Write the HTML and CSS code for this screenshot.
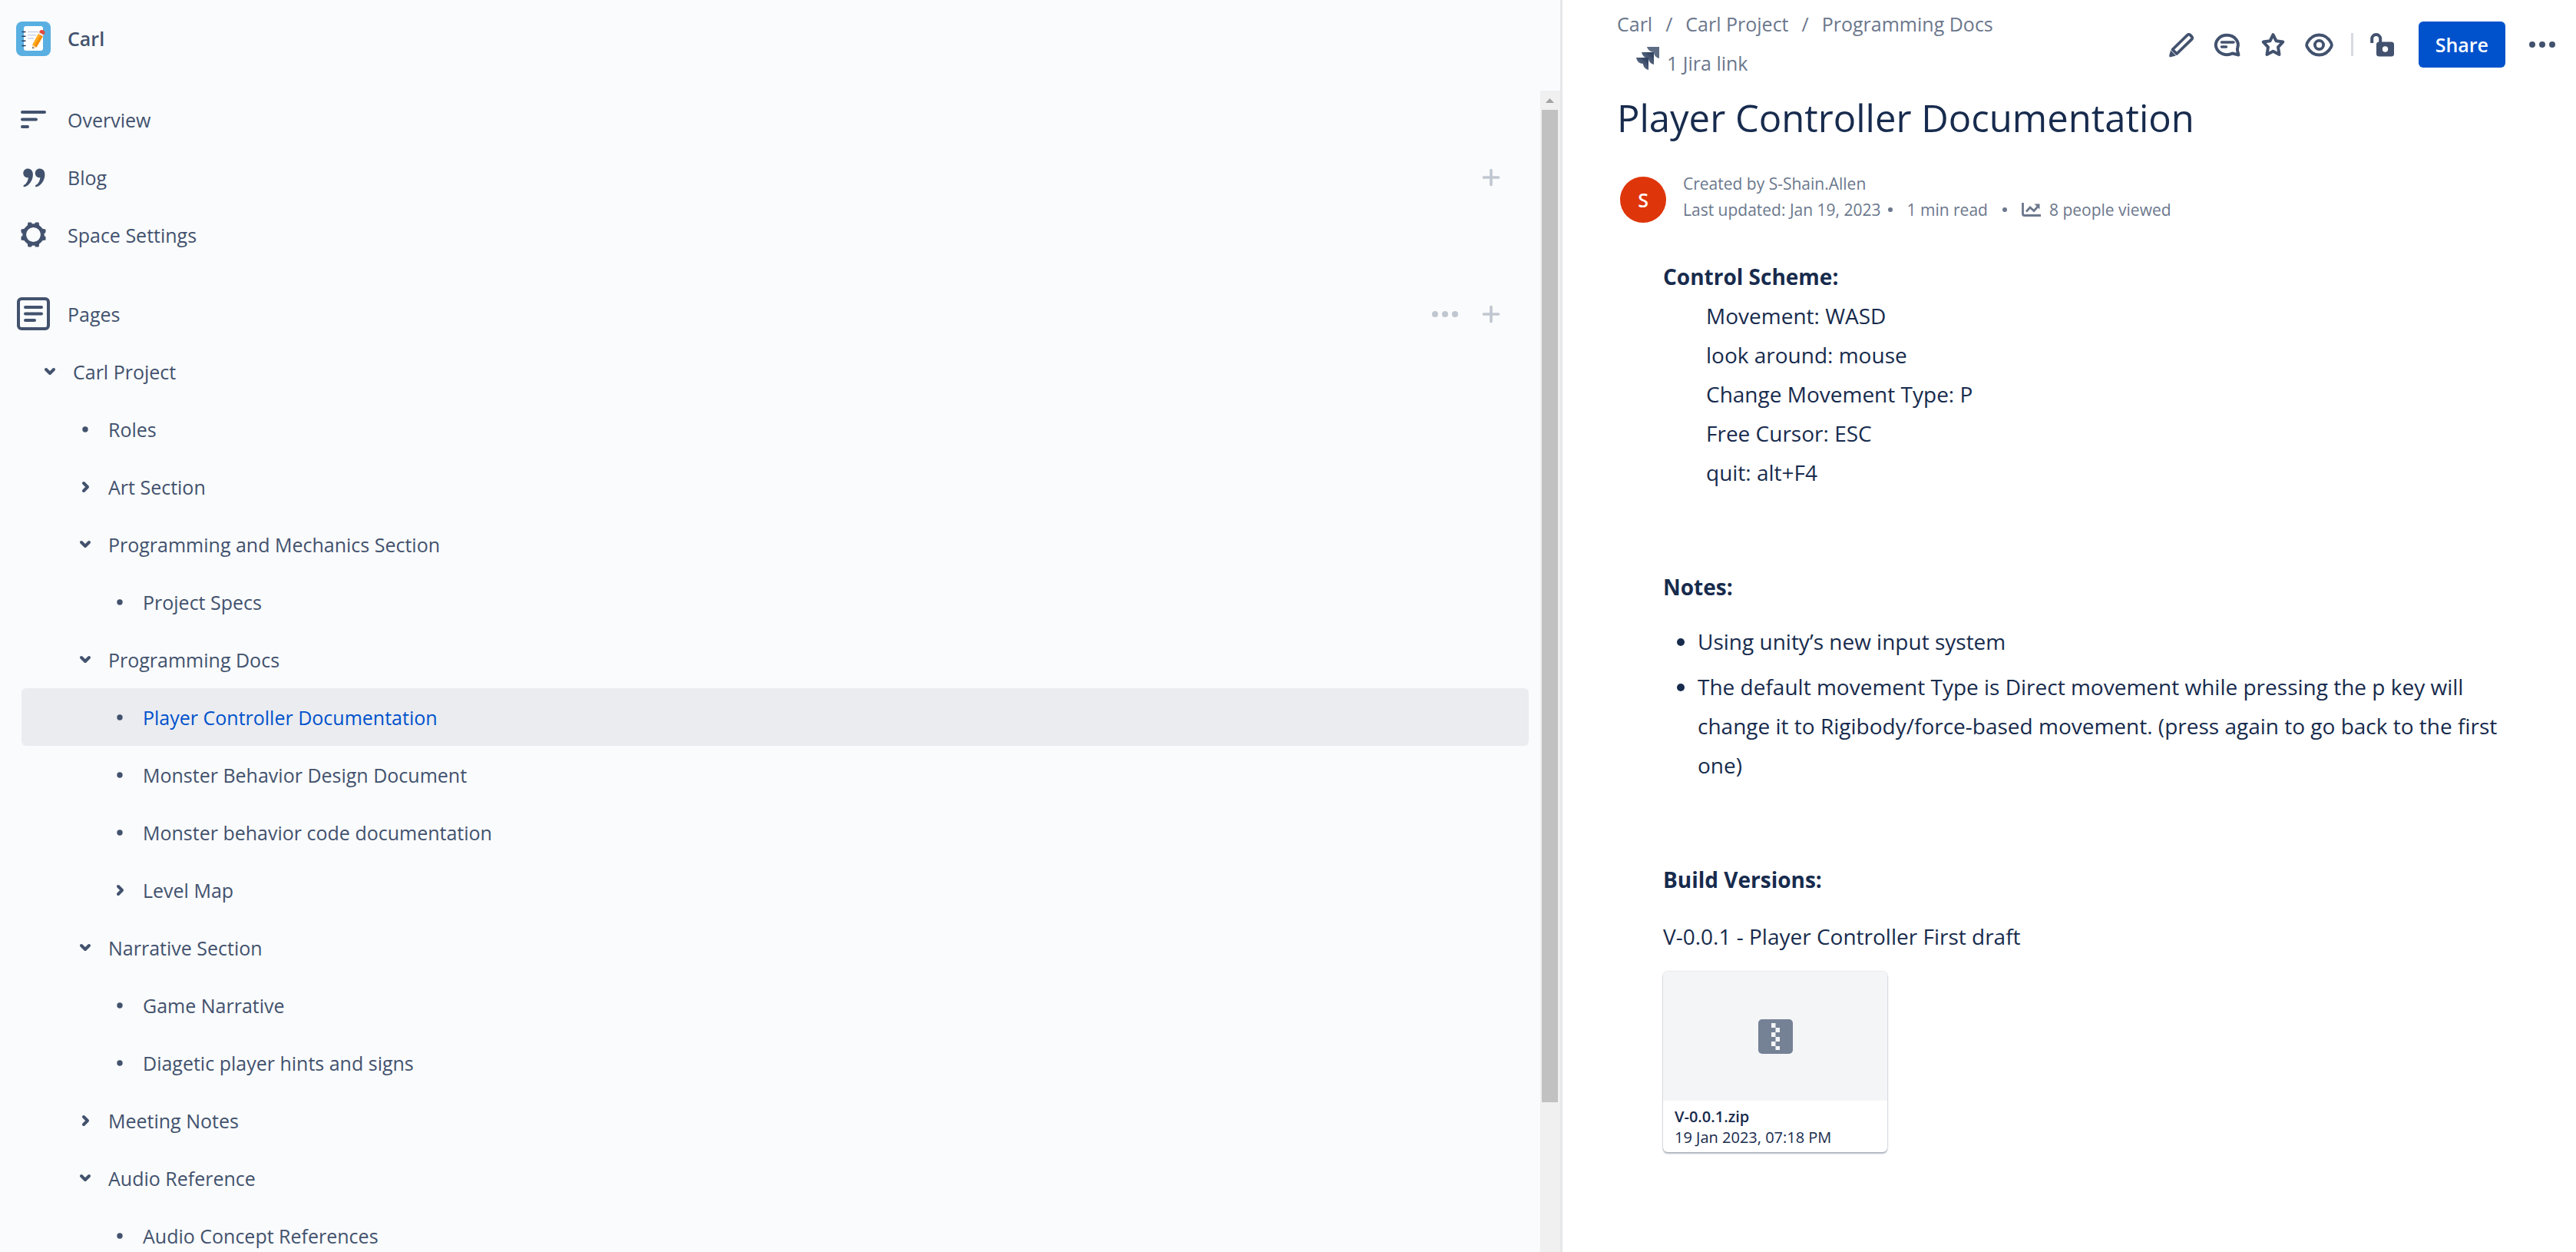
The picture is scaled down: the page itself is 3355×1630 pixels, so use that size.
FILE: index.html
```
<!DOCTYPE html>
<html lang="en">
<head>
<meta charset="utf-8">
<title>Player Controller Documentation - Carl</title>
<meta name="viewport" content="width=device-width, initial-scale=1">
<link rel="stylesheet" href="styles.css">
</head>
<body>
<svg class="sprite" aria-hidden="true">
  <symbol id="i-plus" viewBox="0 0 24 24"><path d="M12 2.500v19M2.500 12h19" fill="none" stroke="currentColor" stroke-width="3.700" stroke-linecap="round"/></symbol>
  <symbol id="i-down" viewBox="0 0 16 16"><path d="M3 5l5 5 5-5" fill="none" stroke="currentColor" stroke-width="4" stroke-linecap="round" stroke-linejoin="round"/></symbol>
  <symbol id="i-right" viewBox="0 0 16 16"><path d="M6 3l5 5-5 5" fill="none" stroke="currentColor" stroke-width="4" stroke-linecap="round" stroke-linejoin="round"/></symbol>
  <symbol id="i-dot" viewBox="0 0 16 16"><circle cx="8" cy="8" r="3.7" fill="currentColor"/></symbol>
  <symbol id="i-more" viewBox="0 0 36 10"><circle cx="5" cy="5" r="4" fill="currentColor"/><circle cx="18" cy="5" r="4" fill="currentColor"/><circle cx="31" cy="5" r="4" fill="currentColor"/></symbol>
</svg>
<div class="app">
  <aside class="sidebar">
    <div class="sidebar-body">
      <header class="space">
        <svg class="space-logo" viewBox="0 0 45 45" aria-hidden="true">
          <rect width="45" height="45" rx="8" fill="#59afe1"/>
          <rect x="10" y="6" width="25" height="32" rx="3" fill="#fff"/>
          <path d="M15 13.500h14M15 17.800h11M15 22h8" stroke="#c9d3ea" stroke-width="1.500"/>
          <path d="M7.500 13.500h5M7.500 19.300h5M7.500 25.300h5M7.500 31.500h5" stroke="#253858" stroke-width="1.600"/>
          <path d="M29 15.500l6 3.500-8.500 14.500-5.500-3z" fill="#ffab1f"/>
          <path d="M32 17.300l3 1.700-8.500 14.500-2.600-1.400z" fill="#f28c0a"/>
          <path d="M21 30.500l5.500 3-4.500 2.500z" fill="#ffd9a8"/>
          <path d="M21.300 32.800l1.900 1.500-1.700 1.200z" fill="#253858"/>
          <path d="M30 13.800l6 3.500-1.200 2.200-6-3.600z" fill="#e6e9f0"/>
          <path d="M31 12c1.500-2 7-.5 6.300 3l-1.300 2.500-6-3.600z" fill="#e5493a"/>
        </svg>
        <a class="space-name" href="#">Carl</a>
      </header>
      <nav class="nav">
        <div class="row">
          <svg class="nav-icon" viewBox="0 0 45 45" aria-hidden="true"><path d="M8 13h29M8 22.500h18M8 32h7" fill="none" stroke="currentColor" stroke-width="4" stroke-linecap="round"/></svg>
          <a href="#">Overview</a>
        </div>
        <div class="row">
          <svg class="nav-icon" viewBox="0 0 45 45" aria-hidden="true"><g fill="currentColor"><path id="q" d="M9.300 17.500c0-3.500 2.600-6 6-6 3.800 0 6.600 2.800 6.600 7.500 0 8-5 14.600-10.800 16.300-1.600.4-2.400-1.400-1-2.200 3.300-1.900 5.500-5.700 5.800-9.900-3.600.6-6.600-2-6.600-5.700z"/><use href="#q" x="15.500"/></g></svg>
          <a href="#">Blog</a>
          <button class="quiet" aria-label="Create blog post"><svg class="plus"><use href="#i-plus"/></svg></button>
        </div>
        <div class="row">
          <svg class="nav-icon" viewBox="0 0 45 45" aria-hidden="true"><g fill="currentColor"><g id="t"><rect x="15" y="6.500" width="5.500" height="7" rx="1.500" transform="rotate(4 18 10)"/><rect x="15" y="31.500" width="5.500" height="7" rx="1.500" transform="rotate(-4 18 35)"/><rect x="24.500" y="6.500" width="5.500" height="7" rx="1.500" transform="rotate(-4 27 10)"/><rect x="24.500" y="31.500" width="5.500" height="7" rx="1.500" transform="rotate(4 27 35)"/></g><use href="#t" transform="rotate(90 22.500 22.500)"/></g><circle cx="22.500" cy="22.500" r="11.800" fill="none" stroke="currentColor" stroke-width="4.800"/></svg>
          <a href="#">Space Settings</a>
        </div>
        <div class="row row-pages">
          <svg class="nav-icon" viewBox="0 0 45 45" aria-hidden="true"><rect x="3" y="3" width="39" height="39" rx="4" fill="none" stroke="currentColor" stroke-width="4"/><path d="M12 14h21M12 22.500h21M12 31h12" fill="none" stroke="currentColor" stroke-width="4" stroke-linecap="round"/></svg>
          <a href="#">Pages</a>
          <div class="row-actions">
            <button class="quiet" aria-label="More page actions"><svg class="more"><use href="#i-more"/></svg></button>
            <button class="quiet" aria-label="Create page"><svg class="plus"><use href="#i-plus"/></svg></button>
          </div>
        </div>
        <ul class="tree">
          <li class="node l1"><svg class="mark"><use href="#i-down"/></svg><a href="#">Carl Project</a></li>
          <li class="node l2"><svg class="mark"><use href="#i-dot"/></svg><a href="#">Roles</a></li>
          <li class="node l2"><svg class="mark"><use href="#i-right"/></svg><a href="#">Art Section</a></li>
          <li class="node l2"><svg class="mark"><use href="#i-down"/></svg><a href="#">Programming and Mechanics Section</a></li>
          <li class="node l3"><svg class="mark"><use href="#i-dot"/></svg><a href="#">Project Specs</a></li>
          <li class="node l2"><svg class="mark"><use href="#i-down"/></svg><a href="#">Programming Docs</a></li>
          <li class="node l3 current"><svg class="mark"><use href="#i-dot"/></svg><a href="#" aria-current="page">Player Controller Documentation</a></li>
          <li class="node l3"><svg class="mark"><use href="#i-dot"/></svg><a href="#">Monster Behavior Design Document</a></li>
          <li class="node l3"><svg class="mark"><use href="#i-dot"/></svg><a href="#">Monster behavior code documentation</a></li>
          <li class="node l3"><svg class="mark"><use href="#i-right"/></svg><a href="#">Level Map</a></li>
          <li class="node l2"><svg class="mark"><use href="#i-down"/></svg><a href="#">Narrative Section</a></li>
          <li class="node l3"><svg class="mark"><use href="#i-dot"/></svg><a href="#">Game Narrative</a></li>
          <li class="node l3"><svg class="mark"><use href="#i-dot"/></svg><a href="#">Diagetic player hints and signs</a></li>
          <li class="node l2"><svg class="mark"><use href="#i-right"/></svg><a href="#">Meeting Notes</a></li>
          <li class="node l2"><svg class="mark"><use href="#i-down"/></svg><a href="#">Audio Reference</a></li>
          <li class="node l3"><svg class="mark"><use href="#i-dot"/></svg><a href="#">Audio Concept References</a></li>
        </ul>
      </nav>
    </div>
    <div class="scrollbar" aria-hidden="true">
      <svg class="scroll-up" viewBox="0 0 21 25"><path d="M5 16l5.500-6 5.500 6z" fill="#a3a3a3"/></svg>
      <div class="scroll-thumb"></div>
    </div>
  </aside>

  <main class="page">
    <header class="page-head">
      <div class="trail">
        <nav class="crumbs" aria-label="Breadcrumbs"><a href="#">Carl</a><span>/</span><a href="#">Carl Project</a><span>/</span><a href="#">Programming Docs</a></nav>
        <a class="jira" href="#">
          <svg class="jira-icon" viewBox="0 0 30 30" aria-hidden="true"><defs><linearGradient id="jg" x1="1" y1="0" x2="0" y2="1"><stop offset="0.200" stop-color="#344563"/><stop offset="1" stop-color="#7a869a"/></linearGradient></defs><path d="M14 0h16v15c-4-1-7-4-7-8-4 0-8-3-9-7z" fill="#5e6c84"/><path d="M7 7h16v16c-4-1-7-4-7-8-4 0-8-3-9-8z" fill="url(#jg)"/><path d="M0 14h16v16c-4-1-7-4-7-8-5 0-8-3-9-8z" fill="url(#jg)"/></svg>
          <span>1 Jira link</span>
        </a>
      </div>
      <div class="tools">
        <button class="tool" aria-label="Edit"><svg viewBox="0 0 45 45"><path d="M11.500 28.500L31 9.500a2.500 2.500 0 0 1 3.500 0l2 2.200a2.500 2.500 0 0 1 0 3.500L17 34z" fill="none" stroke="currentColor" stroke-width="3.800" stroke-linejoin="round"/><path d="M9 29.500l7 7-7 1.800a1.500 1.500 0 0 1-1.800-1.800z" fill="currentColor"/></svg></button>
        <button class="tool" aria-label="Comments"><svg viewBox="0 0 45 45"><path d="M29.500 33.500A14.500 12.700 0 1 1 36.300 26c-.6 1.600-.6 3.300 0 5l1.200 4.500z" fill="none" stroke="currentColor" stroke-width="4" stroke-linejoin="round"/><path d="M15.500 19h15.500M15.500 25h6" fill="none" stroke="currentColor" stroke-width="3.500" stroke-linecap="round"/></svg></button>
        <button class="tool" aria-label="Star"><svg viewBox="0 0 45 45"><path d="M22.500 9.200l3.900 8 8.900 1.400-6.300 6.700 1.500 9.700-8-4.200-8 4.200 1.500-9.700-6.300-6.700 8.900-1.400z" fill="none" stroke="currentColor" stroke-width="4" stroke-linejoin="round"/></svg></button>
        <button class="tool" aria-label="Watch"><svg viewBox="0 0 45 45"><path d="M22.500 9.500c7.500 0 12.500 4.500 15.700 10.500.8 1.600.8 3.400 0 5C35 31 30 35.500 22.500 35.500S10 31 6.800 25c-.8-1.600-.8-3.400 0-5C10 14 15 9.500 22.500 9.500z" fill="none" stroke="currentColor" stroke-width="3.800"/><circle cx="22.500" cy="22.500" r="5.600" fill="none" stroke="currentColor" stroke-width="3.800"/></svg></button>
        <span class="divider"></span>
        <button class="tool" aria-label="Restrictions"><svg viewBox="0 0 45 45"><rect x="15" y="18.500" width="23" height="19" rx="3.500" fill="currentColor"/><path d="M9.200 20v-5.500a5.500 5.500 0 0 1 11 0V20" fill="none" stroke="currentColor" stroke-width="4"/><circle cx="26.500" cy="28" r="3.700" fill="#fff"/></svg></button>
        <button class="share">Share</button>
        <button class="tool" aria-label="More actions"><svg class="more"><use href="#i-more"/></svg></button>
      </div>
    </header>

    <h1>Player Controller Documentation</h1>

    <div class="byline">
      <span class="avatar">S</span>
      <div class="meta">
        <div>Created by <a href="#">S-Shain.Allen</a></div>
        <div class="stats"><span>Last updated: Jan 19, 2023</span><span class="sep"></span><span>1 min read</span><span class="sep wide"></span><svg class="chart" viewBox="0 0 26 18" aria-hidden="true"><path d="M1.500 0v14.500a2 2 0 0 0 2 2H25" fill="none" stroke="currentColor" stroke-width="2.800"/><path d="M6 11.500l5-5.500 5 4.500 6-6.500" fill="none" stroke="currentColor" stroke-width="2.800"/><path d="M16.500 1.500h7v7z" fill="currentColor"/></svg><a href="#">8 people viewed</a></div>
      </div>
    </div>

    <article class="doc">
      <p><strong>Control Scheme:</strong></p>
      <p class="indent">Movement: WASD<br>look around: mouse<br>Change Movement Type: P<br>Free Cursor: ESC<br>quit: alt+F4</p>
      <p class="section"><strong>Notes:</strong></p>
      <ul>
        <li>Using unity’s new input system</li>
        <li>The default movement Type is Direct movement while pressing the p key will change it to Rigibody/force-based movement. (press again to go back to the first one)</li>
      </ul>
      <p class="section"><strong>Build Versions:</strong></p>
      <p class="version">V-0.0.1 - Player Controller First draft</p>
      <a class="file" href="#">
        <span class="preview"><svg class="zip" viewBox="0 0 45 45" aria-hidden="true"><rect width="45" height="45" rx="5" fill="#758195"/><path d="M17 5h5.500v6H17zM22.500 11H28v6h-5.500zM17 17h5.500v6H17zM22.500 23H28v6h-5.500zM17 29h5.500v6H17zM22.500 35H28v5h-5.500z" fill="#f4f5f7"/></svg></span>
        <span class="file-info"><span class="file-name">V-0.0.1.zip</span><span>19 Jan 2023, 07:18 PM</span></span>
      </a>
    </article>
  </main>
</div>
</body>
</html>
```
FILE: styles.css
```
* {
  box-sizing: border-box;
}

body {
  margin: 0;
  font-family: "Open Sans", "Noto Sans", sans-serif;
  font-size: 25px;
  color: #172b4d;
  background: #fff;
}

a {
  color: inherit;
  text-decoration: none;
}

button {
  margin: 0;
  padding: 0;
  border: 0;
  background: none;
  color: inherit;
  font: inherit;
}

svg {
  display: block;
  flex: none;
}

.sprite {
  position: absolute;
  width: 0;
  height: 0;
}

.app {
  display: grid;
  grid-template-columns: 2035fr 1320fr;
  min-height: 100vh;
}

/* Sidebar */
.sidebar {
  display: flex;
  height: 100vh;
  overflow: hidden;
  background: #fafbfc;
  border-right: 3px solid #e6e7e9;
  color: #42526e;
}

.sidebar-body {
  flex: 1;
}

.space {
  display: flex;
  align-items: center;
  gap: 22px;
  height: 118px;
  padding: 0 21px 18px;
}

.space-logo,
.nav-icon {
  width: 45px;
  height: 45px;
}

.space-name {
  font-weight: 600;
}

.row {
  display: flex;
  align-items: center;
  gap: 22px;
  height: 75px;
  padding: 0 52px 0 21px;
}

.row > a {
  flex: 1;
}

.row-pages {
  margin-top: 28px;
}

.row-actions {
  display: flex;
  align-items: center;
  gap: 30px;
}

.quiet {
  display: grid;
  place-items: center;
  color: #c1c7d0;
}

.plus {
  width: 24px;
  height: 24px;
}

.more {
  width: 36px;
  height: 10px;
}

.tree {
  margin: 0 15px 0 28px;
  padding: 0;
  list-style: none;
}

.node {
  display: flex;
  align-items: center;
  gap: 22px;
  height: 75px;
  border-radius: 6px;
}

.mark {
  width: 16px;
  height: 16px;
}

.l1 {
  padding-left: 29px;
}

.l2 {
  padding-left: 75px;
}

.l3 {
  padding-left: 120px;
}

.current {
  background: #ebecf0;
}

.current a {
  color: #0052cc;
}

.scrollbar {
  width: 26px;
  margin-top: 118px;
  padding: 0 3px 0 2px;
  background: #f0f0f0;
}

.scroll-up {
  width: 21px;
  height: 25px;
}

.scroll-thumb {
  height: calc(100% - 220px);
  background: #c1c1c1;
}

/* Page */
.page {
  padding: 6px 26px 40px 71px;
}

.page-head {
  display: flex;
  justify-content: space-between;
  align-items: flex-start;
  color: #6b778c;
}

.crumbs {
  display: flex;
  gap: 17px;
  line-height: 50px;
}

.jira {
  display: flex;
  align-items: flex-start;
  gap: 10px;
  margin-top: 2px;
  padding-left: 25px;
  line-height: 48px;
}

.jira-icon {
  width: 30px;
  height: 30px;
  margin-top: 3px;
}

.tools {
  display: flex;
  align-items: center;
  gap: 15px;
  margin-top: 22px;
  color: #42526e;
}

.tool svg {
  width: 45px;
  height: 45px;
}

.tool .more {
  width: 36px;
  height: 10px;
}

.divider {
  width: 3px;
  height: 30px;
  margin-left: 4px;
  background: #d6d9e0;
}

.share {
  height: 60px;
  margin: 0 15px 0 10px;
  padding: 0 22px;
  border-radius: 6px;
  background: #0052cc;
  color: #fff;
  font-weight: 600;
}

h1 {
  margin: 12px 0 0;
  font-size: 49px;
  font-weight: 400;
  line-height: 70px;
}

.byline {
  display: flex;
  align-items: flex-end;
  gap: 22px;
  margin-top: 34px;
  padding-left: 4px;
  color: #6b778c;
  font-size: 21px;
  line-height: 34px;
}

.avatar {
  display: grid;
  place-items: center;
  width: 60px;
  height: 60px;
  border-radius: 50%;
  background: #de350b;
  color: #fff;
  font-size: 25px;
  font-weight: 600;
}

.stats {
  display: flex;
  align-items: center;
}

.sep {
  width: 6px;
  height: 6px;
  margin: 0 19px 0 9px;
  border-radius: 50%;
  background: currentColor;
}

.wide {
  margin: 0 19px;
}

.chart {
  width: 26px;
  height: 18px;
  margin-right: 10px;
}

.doc {
  padding: 45px 30px 0 60px;
  font-size: 28px;
  line-height: 51px;
}

.doc p {
  margin: 0;
}

.doc .indent {
  padding-left: 56px;
}

.doc .section {
  margin-top: 98px;
}

.doc .version {
  margin-top: 23px;
}

.doc ul {
  display: grid;
  gap: 8px;
  margin: 20px 0 0;
  padding-left: 45px;
}

.file {
  display: block;
  width: 292px;
  margin-top: 20px;
  border-radius: 6px;
  overflow: hidden;
  background: #fff;
  box-shadow: 0 2px 2px rgba(9, 30, 66, 0.3), 0 0 2px rgba(9, 30, 66, 0.3);
  font-size: 20px;
  line-height: 27px;
}

.preview {
  display: grid;
  place-items: center;
  height: 168px;
  background: #f4f5f7;
}

.zip {
  width: 45px;
  height: 45px;
}

.file-info {
  display: grid;
  padding: 7px 15px 6px;
}

.file-name {
  font-weight: 600;
}
```
